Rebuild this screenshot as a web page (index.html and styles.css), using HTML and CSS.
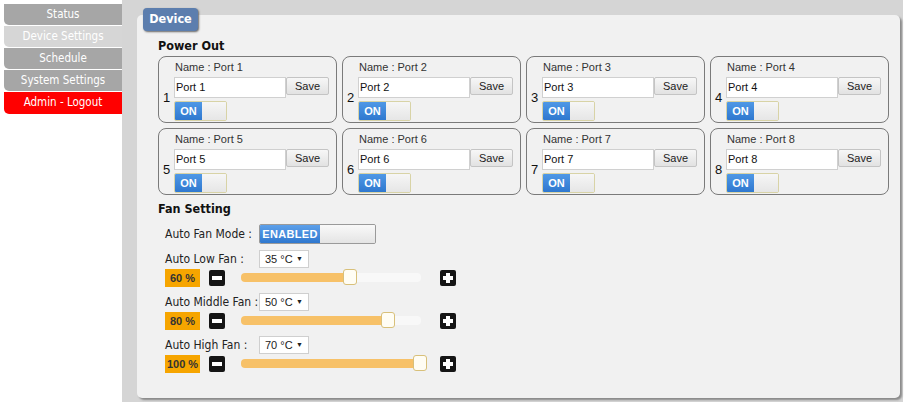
FILE: index.html
```html
<!DOCTYPE html>
<html>
<head>
<meta charset="utf-8">
<link rel="stylesheet" href="styles.css">
</head>
<body>
<div class="page">
  <nav class="sidebar">
    <div class="menu-item">Status</div>
    <div class="menu-item active">Device Settings</div>
    <div class="menu-item">Schedule</div>
    <div class="menu-item">System Settings</div>
    <div class="menu-item logout">Admin - Logout</div>
  </nav>
  <main class="main">
    <section class="panel">
      <div class="tab">Device</div>
      <h2 class="section-title">Power Out</h2>
      <div class="ports">
        <div class="port"><span class="num">1</span><div class="port-body"><div class="pname">Name : Port 1</div><div class="prow"><div class="pinput">Port 1</div><div class="save">Save</div></div><div class="onoff"><span class="on">ON</span><span class="off"></span></div></div></div>
        <div class="port"><span class="num">2</span><div class="port-body"><div class="pname">Name : Port 2</div><div class="prow"><div class="pinput">Port 2</div><div class="save">Save</div></div><div class="onoff"><span class="on">ON</span><span class="off"></span></div></div></div>
        <div class="port"><span class="num">3</span><div class="port-body"><div class="pname">Name : Port 3</div><div class="prow"><div class="pinput">Port 3</div><div class="save">Save</div></div><div class="onoff"><span class="on">ON</span><span class="off"></span></div></div></div>
        <div class="port"><span class="num">4</span><div class="port-body"><div class="pname">Name : Port 4</div><div class="prow"><div class="pinput">Port 4</div><div class="save">Save</div></div><div class="onoff"><span class="on">ON</span><span class="off"></span></div></div></div>
        <div class="port"><span class="num">5</span><div class="port-body"><div class="pname">Name : Port 5</div><div class="prow"><div class="pinput">Port 5</div><div class="save">Save</div></div><div class="onoff"><span class="on">ON</span><span class="off"></span></div></div></div>
        <div class="port"><span class="num">6</span><div class="port-body"><div class="pname">Name : Port 6</div><div class="prow"><div class="pinput">Port 6</div><div class="save">Save</div></div><div class="onoff"><span class="on">ON</span><span class="off"></span></div></div></div>
        <div class="port"><span class="num">7</span><div class="port-body"><div class="pname">Name : Port 7</div><div class="prow"><div class="pinput">Port 7</div><div class="save">Save</div></div><div class="onoff"><span class="on">ON</span><span class="off"></span></div></div></div>
        <div class="port"><span class="num">8</span><div class="port-body"><div class="pname">Name : Port 8</div><div class="prow"><div class="pinput">Port 8</div><div class="save">Save</div></div><div class="onoff"><span class="on">ON</span><span class="off"></span></div></div></div>
      </div>
      <h2 class="section-title fan-title">Fan Setting</h2>
      <div class="fan">
        <div class="mode-row">
          <span class="flabel">Auto Fan Mode :</span>
          <div class="enabled"><span class="en-on">ENABLED</span><span class="en-off"></span></div>
        </div>
        <div class="sel-row"><span class="flabel">Auto Low Fan :</span><div class="select">35 °C<span class="arrow">▼</span></div></div>
        <div class="slide-row">
          <span class="pct">60 %</span>
          <span class="btn"><span class="minus"></span></span>
          <div class="track"><div class="fill" style="width:61%"></div><div class="thumb" style="left:61%"></div></div>
          <span class="btn"><span class="minus"></span><span class="vbar"></span></span>
        </div>
        <div class="sel-row gap"><span class="flabel">Auto Middle Fan :</span><div class="select">50 °C<span class="arrow">▼</span></div></div>
        <div class="slide-row">
          <span class="pct">80 %</span>
          <span class="btn"><span class="minus"></span></span>
          <div class="track"><div class="fill" style="width:82%"></div><div class="thumb" style="left:82%"></div></div>
          <span class="btn"><span class="minus"></span><span class="vbar"></span></span>
        </div>
        <div class="sel-row gap"><span class="flabel">Auto High Fan :</span><div class="select">70 °C<span class="arrow">▼</span></div></div>
        <div class="slide-row">
          <span class="pct">100 %</span>
          <span class="btn"><span class="minus"></span></span>
          <div class="track"><div class="fill" style="width:100%"></div><div class="thumb" style="left:100%"></div></div>
          <span class="btn"><span class="minus"></span><span class="vbar"></span></span>
        </div>
      </div>
    </section>
  </main>
</div>
</body>
</html>
```

FILE: styles.css
```css
* { box-sizing: border-box; }
html, body { margin: 0; padding: 0; background: #ffffff; }
body { width: 912px; height: 409px; overflow: hidden; font-family: "Liberation Sans", Arial, sans-serif; }
.page { display: flex; align-items: flex-start; }

.sidebar { width: 122px; padding: 4px 0 0 4px; display: flex; flex-direction: column; gap: 1px; }
.menu-item {
  height: 21px; line-height: 21px; text-align: center; color: #fff;
  background: #a6a6a6; font-family: "DejaVu Sans Condensed", "DejaVu Sans", sans-serif;
  font-size: 11.5px; border-radius: 0 0 0 5px;
}
.menu-item.active { background: #d6d6d6; }
.menu-item.logout { background: #ff0000; height: 22px; }

.main { width: 781px; height: 402px; background: #d5d5d5; padding: 15px 3px 4px 15px; }
.panel {
  position: relative; height: 383px; background: #f1f1f1; border-radius: 5px;
  box-shadow: 2px 2px 2px #8a8a8a; padding: 23px 0 0 21px;
}
.tab {
  position: absolute; left: 6px; top: -7px; width: 55px; height: 23px;
  background: #5c7eae; color: #fff; border-radius: 4px; box-shadow: 1px 1px 2px #666;
  font-family: "DejaVu Sans Condensed", "DejaVu Sans", sans-serif; font-weight: bold; font-size: 12.5px;
  line-height: 22px; text-align: center;
}
.section-title {
  margin: 0; font-family: "DejaVu Sans Condensed", "DejaVu Sans", sans-serif; font-weight: bold;
  font-size: 12.5px; color: #111; height: 18px; line-height: 15px;
}
.ports { display: grid; grid-template-columns: repeat(4, 179px); gap: 5px; }
.port {
  height: 67px; border: 1.5px solid #7a7a7a; border-radius: 8px; display: flex; align-items: center;
  padding: 3px 0 0 4px;
}
.num { width: 11px; font-size: 13px; color: #111; margin-top: 12px; }
.port-body { display: flex; flex-direction: column; }
.pname { font-size: 11px; color: #333; height: 16px; line-height: 12px; padding-left: 1px; }
.prow { display: flex; align-items: flex-start; }
.pinput {
  width: 112px; height: 21px; background: #fff; border: 1px solid #d0d0d0; font-size: 11px; line-height: 19px;
  padding-left: 1px; color: #111;
}
.save {
  width: 43px; height: 18px; border: 1px solid #c4c4c4; background: linear-gradient(#f7f7f7, #e2e2e2);
  font-size: 11px; text-align: center; line-height: 16px; color: #222; border-radius: 2px;
}
.onoff {
  margin-top: 3px; width: 53px; height: 20px; border: 1px solid #d8d3a6; display: flex; border-radius: 2px; overflow: hidden;
}
.on {
  width: 27px; background: linear-gradient(#4f98e6, #2f78cf); color: #fff; font-weight: bold; font-size: 11px;
  line-height: 18px; text-align: center;
}
.off { flex: 1; background: linear-gradient(#f6f6f6, #e6e6e6); }

.fan-title { margin-top: 6px; height: 19px; }
.fan { padding-left: 7px; display: flex; flex-direction: column; }
.flabel { font-family: "DejaVu Sans Condensed", "DejaVu Sans", sans-serif; font-size: 12px; color: #222; width: 94px; }
.mode-row { display: flex; align-items: center; height: 20px; margin-top: 4px; margin-bottom: 6px; }
.enabled {
  width: 117px; height: 20px; border: 1px solid #9a9a9a; display: flex; border-radius: 2px; overflow: hidden;
  box-shadow: inset 0 0 1px #ccc;
}
.en-on {
  width: 60px; background: linear-gradient(#5da0ea, #2f78cf); color: #fff; font-weight: bold; font-size: 11px;
  line-height: 18px; text-align: center; letter-spacing: 0.3px;
}
.en-off { flex: 1; background: linear-gradient(#f9f9f9, #e4e4e4); }
.sel-row { display: flex; align-items: center; height: 18px; }
.sel-row.gap { margin-top: 6px; }
.select {
  width: 50px; height: 18px; background: #fff; border: 1px solid #cfcfcf; font-size: 11px; color: #222;
  line-height: 16px; padding-left: 5px; position: relative;
}
.arrow { position: absolute; right: 5px; top: 0; font-size: 7px; }
.slide-row { display: flex; align-items: center; height: 19px; }
.pct {
  width: 35px; height: 18px; background: #f6a500; color: #333; font-weight: bold; font-size: 11px;
  line-height: 18px; text-align: center; margin-right: 9px;
}
.btn {
  position: relative; width: 16px; height: 16px; background: #151515; border-radius: 2px; display: inline-block;
}
.minus { position: absolute; left: 3px; top: 6px; width: 10px; height: 4px; background: #fff; }
.vbar { position: absolute; left: 6px; top: 3px; width: 4px; height: 10px; background: #fff; }
.track {
  position: relative; width: 180px; height: 9px; margin: 0 19px 0 16px; background: #f8f8f8; border-radius: 4px;
}
.fill { height: 9px; background: #f7c168; border-radius: 4px; }
.thumb {
  position: absolute; top: -4px; width: 14px; height: 16px; margin-left: -8px; background: #fffdf4;
  border: 1px solid #d8c07a; border-radius: 3px;
}
```
